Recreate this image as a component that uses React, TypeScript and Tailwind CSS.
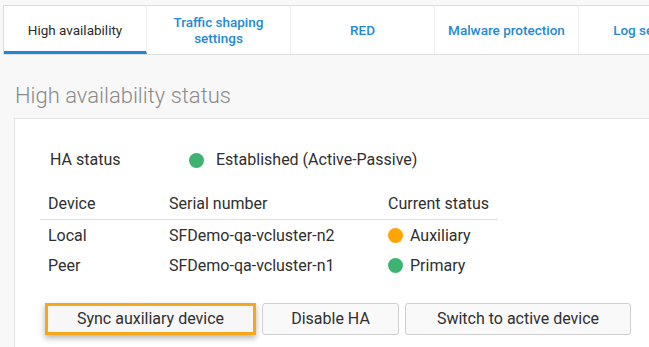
const font = { fontFamily: "Roboto, 'Open Sans', sans-serif" }

const tabs = [
  { label: "High availability", w: "w-[143px]", active: true },
  { label: "Traffic shaping settings", w: "w-[144px]", twoLine: true },
  { label: "RED", w: "w-[144px]" },
  { label: "Malware protection", w: "w-[144px]" },
  { label: "Log settings", w: "w-[144px]" },
]

function Dot({ color }: { color: string }) {
  return <span className={`inline-block w-[15px] h-[15px] rounded-full ${color}`} />
}

export default function App() {
  return (
    <div className="w-[649px] h-[347px] overflow-hidden bg-[#f8f8f8] text-[#2f2f2f]" style={font}>
      <div className="pt-[5px] pl-[3px]">
        <div className="flex h-[50px] bg-white border-t border-b border-[#dedede] border-l w-[760px]">
          {tabs.map((t) => (
            <div
              key={t.label}
              className={`${t.w} shrink-0 flex items-center justify-center text-center text-[13.5px] leading-[16px] border-r border-[#efefef] ${
                t.active ? "text-[#2b2b2b] border-b-[3px] border-b-[#1d87d6] pt-[3px]" : "text-[#2589d4] font-medium"
              }`}
            >
              {t.twoLine ? (
                <span className="w-[104px]">Traffic shaping settings</span>
              ) : (
                t.label
              )}
            </div>
          ))}
        </div>
      </div>

      <h1 className="mt-[27px] ml-[15px] text-[22px] font-light text-[#8a8a8a] leading-[28px]">High availability status</h1>

      <div className="mt-[8px] ml-[14px] bg-white border border-[#e2e2e2] w-[700px] h-[300px] pt-[31px]">
        <div className="flex items-center ml-[35px] text-[16px] h-[20px]">
          <span className="w-[139px]">HA status</span>
          <Dot color="bg-[#3cb371]" />
          <span className="ml-[12px]">Established (Active-Passive)</span>
        </div>

        <div className="mt-[20px] ml-[25px] w-[458px] text-[16px]">
          <div className="flex h-[30px] items-center border-b border-[#e0e0e0] pb-[1px]">
            <span className="w-[129px] pl-[8px]">Device</span>
            <span className="w-[219px]">Serial number</span>
            <span>Current status</span>
          </div>
          <div className="flex h-[31px] items-center">
            <span className="w-[129px] pl-[8px]">Local</span>
            <span className="w-[219px]">SFDemo-qa-vcluster-n2</span>
            <span className="flex items-center gap-[7px]"><Dot color="bg-[#ffa500]" />Auxiliary</span>
          </div>
          <div className="flex h-[29px] items-center">
            <span className="w-[129px] pl-[8px]">Peer</span>
            <span className="w-[219px]">SFDemo-qa-vcluster-n1</span>
            <span className="flex items-center gap-[7px]"><Dot color="bg-[#3cb371]" />Primary</span>
          </div>
        </div>

        <div className="flex gap-[6px] mt-[23px] ml-[30px] text-[16px]">
          <div className="w-[211px] h-[32px] border-[3px] border-[#f5a81c] shadow-[0_3px_6px_rgba(0,0,0,0.3)] bg-[#f7f7f7] flex items-center justify-center">
            Sync auxiliary device
          </div>
          <button className="w-[137px] h-[32px] border border-[#cfcfcf] rounded-[3px] bg-[#f9f9f9]">Disable HA</button>
          <button className="w-[226px] h-[32px] border border-[#cfcfcf] rounded-[3px] bg-[#f9f9f9]">Switch to active device</button>
        </div>
      </div>
    </div>
  )
}
